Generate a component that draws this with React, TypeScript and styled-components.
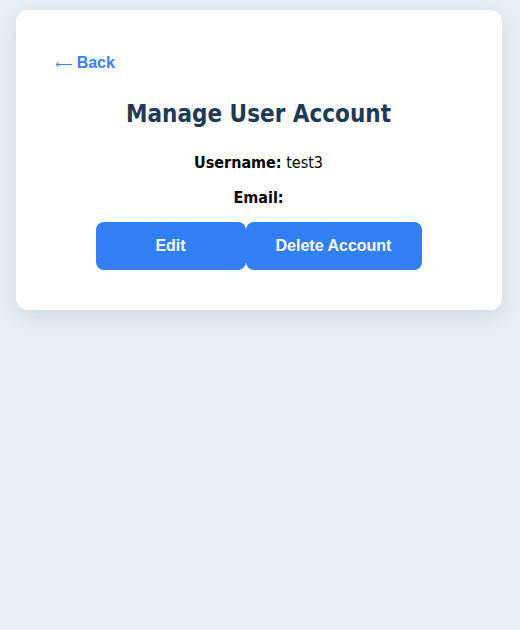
import React from "react";
import styled, { createGlobalStyle } from "styled-components";

const Global = createGlobalStyle`
  html, body { margin: 0; padding: 0; background: #e9eff6; }
  body { font-family: "DejaVu Sans Condensed", "DejaVu Sans", Verdana, sans-serif; font-stretch: condensed; min-height: 630px; }
`;

const Page = styled.div`
  padding: 10px 18px 0 16px;
`;

const Card = styled.div`
  background: #ffffff;
  border-radius: 12px;
  box-shadow: 0 6px 20px rgba(30, 50, 80, 0.12);
  padding: 44px 40px 40px 39px;
  display: flex;
  flex-direction: column;
  align-items: center;
`;

const BackLink = styled.a`
  align-self: flex-start;
  font-family: "Liberation Sans", Arial, sans-serif;
  font-stretch: normal;
  font-weight: bold;
  font-size: 16px;
  line-height: 18px;
  color: #3b82f6;
  text-decoration: none;
  cursor: pointer;
`;

const Arrow = styled.span`
  font-family: "DejaVu Sans", sans-serif;
  font-weight: normal;
  font-stretch: normal;
  font-size: 12px;
  line-height: 1;
`;

const Title = styled.h2`
  margin: 28px 0 25px;
  font-size: 24px;
  font-weight: bold;
  color: #1f3a57;
`;

const Field = styled.p`
  margin: 0 0 16px;
  font-size: 16px;
  color: #000;
  & strong { font-weight: bold; }
`;

const Actions = styled.div`
  display: flex;
  margin-top: -1px;
`;

const Button = styled.button<{ $w: number }>`
  width: ${(p) => p.$w}px;
  height: 48px;
  border: none;
  border-radius: 8px;
  background: #3380f6;
  color: #fff;
  font-family: "Liberation Sans", Arial, sans-serif;
  font-stretch: normal;
  font-weight: bold;
  font-size: 16px;
  cursor: pointer;
`;

export default function App() {
  return (
    <>
      <Global />
      <Page>
        <Card>
          <BackLink>
            <Arrow>⟵</Arrow> Back
          </BackLink>
          <Title>Manage User Account</Title>
          <Field>
            <strong>Username:</strong> test3
          </Field>
          <Field>
            <strong>Email:</strong>
          </Field>
          <Actions>
            <Button $w={150}>Edit</Button>
            <Button $w={176}>Delete Account</Button>
          </Actions>
        </Card>
      </Page>
    </>
  );
}
